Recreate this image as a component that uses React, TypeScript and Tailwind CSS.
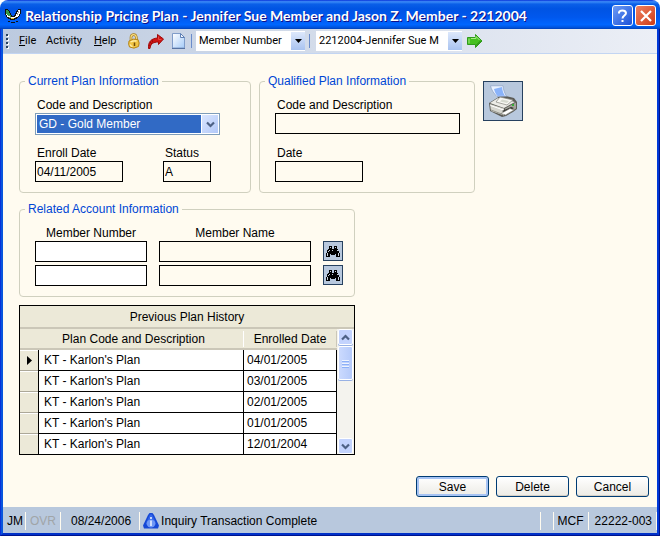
import React, { useState } from "react";

const history = [
  { plan: "KT - Karlon's Plan", date: "04/01/2005" },
  { plan: "KT - Karlon's Plan", date: "03/01/2005" },
  { plan: "KT - Karlon's Plan", date: "02/01/2005" },
  { plan: "KT - Karlon's Plan", date: "01/01/2005" },
  { plan: "KT - Karlon's Plan", date: "12/01/2004" },
];

const AppLogo = () => (
  <svg width="16" height="16" viewBox="0 0 16 16" shapeRendering="crispEdges" aria-hidden="true">
    <path d="M0 2h3v1h1v1h1v2h1v2h1v1h2V8h1V6h1V4h1V3h1V2h3v5h-1v2h-1v1h-1v1h-1v1h-2v1H5v-1H3v-1H2v-1H1V8H0z" fill="#111" />
    <path d="M1 3h2v1h1v2h1v2h1v2H5V9H3V8H2V7H1z" fill="#379a45" />
    <path d="M1 7h1v1h1v1h2v1h5V9h1V7h1V5h1V3h2v4h-1v2h-1v1h-2v1H4v-1H2V8H1z" fill="#fff" />
    <path d="M13 4h1v2h-1zM12 6h1v2h-1zM4 10h2v1H4zM10 10h1v1h-1z" fill="#9a9a9a" />
    <path d="M6 11h3v1H6z" fill="#e7c42e" />
    <path d="M3 14h2v1H3zM6 15h4v1H6zM11 14h2v1h-2z" fill="#111" />
  </svg>
);

const LockIcon = () => (
  <svg width="12" height="16" viewBox="0 0 12 16" aria-hidden="true">
    <path d="M3 8V4.500C3 1 7.500.5 8.300 4L8.500 7" fill="none" stroke="#a87d1c" strokeWidth="2.600" />
    <path d="M3 8V4.500C3 1 7.500.5 8.300 4L8.500 7" fill="none" stroke="#f6dc83" strokeWidth="1.200" />
    <path d="M1 8q4-3 9-1.500q2 3.500.5 7Q6 16.500 1.500 14Q0 11 1 8z" fill="#f1c544" stroke="#b4851d" />
    <path d="M2.500 9q3-1.700 6-1M2 11.500q1 2 2.500 2" fill="none" stroke="#fff0b0" strokeWidth="1.300" />
    <path d="M6.500 9.500v3.500" stroke="#6f4a08" strokeWidth="1.500" />
  </svg>
);

const RedArrowIcon = () => (
  <svg width="16" height="15" viewBox="0 0 16 15" aria-hidden="true">
    <path d="M.5 14.500C0 8 3 4.500 9.500 4V.5l6 4.500-5 5.500V8C5 8 2.500 10 2 14.500z" fill="#cf1414" stroke="#a00b0b" />
    <path d="M1 11l2 1M2 8l2 2M4 6l1 2.500" stroke="#8a0606" strokeWidth=".8" />
    <path d="M10.500 2.500v3h3" fill="none" stroke="#e8473e" />
  </svg>
);

const PageIcon = () => (
  <svg width="13" height="16" viewBox="0 0 13 16" aria-hidden="true">
    <defs>
      <linearGradient id="sheet" x1="0" y1="0" x2="1" y2="1">
        <stop offset="0" stopColor="#fff" />
        <stop offset="1" stopColor="#a4cbf8" />
      </linearGradient>
    </defs>
    <path d="M.5.5h8l4 4v10.500H.5z" fill="url(#sheet)" stroke="#7f9cc9" />
    <path d="M8.500.5v4h4z" fill="#f4f8fe" stroke="#5f80b5" />
    <path d="M0 15.500h13" stroke="#5673a3" />
  </svg>
);

const GreenArrowIcon = () => (
  <svg width="16" height="14" viewBox="0 0 16 14" aria-hidden="true">
    <path d="M.5 3.500h8v-3l6.500 6.500-6.500 6.500v-3h-8z" fill="#44c01f" stroke="#2f9a1c" />
    <path d="M2 4.500v5M4 4.500h5v-2l3.500 3.500" fill="none" stroke="#a6ea84" />
    <path d="M9 11.500l4.500-4.500" stroke="#22820f" />
  </svg>
);

const PrinterIcon = () => (
  <svg width="30" height="32" viewBox="0 0 30 32" aria-hidden="true">
    <path d="M1 18l8-5 4-3 13 3 3 4v7l-4 3-7 4-4 1L2 26z" fill="#5c5c57" />
    <path d="M2 18l8-5 17 4-11 6z" fill="#ecece7" />
    <path d="M8 17l4-5 13 3-6 5z" fill="#f7f7f3" stroke="#85857e" strokeWidth=".7" />
    <path d="M12 16.500l2-2 7 1.500-2 2z" fill="#d5d9cf" />
    <path d="M2 19l14 4.500v7L3 26z" fill="#d6d6cf" />
    <path d="M17 23.500l11-6v6l-3 2-8 5z" fill="#a3a39b" />
    <path d="M2.500 20.500l13 4.500" stroke="#fff" />
    <path d="M3 25l12 4.500" stroke="#96968e" />
    <path d="M2.500.8h12.500c.3 4 1.500 7 3.500 10.500l-9.500.2C5.500 8 3.500 5 2.500.8z" fill="#eaf2ff" stroke="#8096bd" strokeWidth=".6" />
    <path d="M6 4l8-2c.4 4 1.300 6.500 3 8.800l-7.500.2C7.800 9 6.500 6.500 6 4z" fill="#8ab3fa" />
    <path d="M14 26l9-4 3 1-9 5z" fill="#33332f" />
    <path d="M13 28.500l9-5 4 1.500-8.500 5z" fill="#fff" stroke="#77776f" strokeWidth=".6" />
    <path d="M24 19h2v2h-2z" fill="#37ad37" />
  </svg>
);

const BinocularsIcon = () => (
  <svg width="14" height="13" viewBox="0 0 14 13" shapeRendering="crispEdges" aria-hidden="true">
    <path d="M3 1h3v3h2V1h3v3h1v2h1v2h1v4h-4V9H9v1H5V9H4v3H0V8h1V5h1V4h1z" fill="#000" />
    <path d="M4 2h1v1H4zM9 2h1v1H9zM3 5h1v1H3zM11 5h1v1h-1zM1 8h1v3H1zM2 6h1v1H2zM12 8h1v3h-1zM6 5h1v1H6z" fill="#c9d0da" />
  </svg>
);

const InfoIcon = () => (
  <svg width="16" height="16" viewBox="0 0 16 16" aria-hidden="true">
    <path d="M6.500 0h3L11 2l5 10.500-1 3H1l-1-3L5 2z" fill="#1649d6" />
    <path d="M7 1.500h2l3.500 7.500h-9z" fill="#3265ea" />
    <ellipse cx="8" cy="10.500" rx="4.500" ry="4" fill="#6f98f5" />
    <path d="M8 4v2M8 7.500V13" stroke="#e8f0ff" strokeWidth="1.600" />
  </svg>
);

const Chevron = ({ up = false }: { up?: boolean }) => (
  <svg width="9" height="7" viewBox="0 0 9 7" aria-hidden="true">
    <path d={up ? "M1 5.500L4.500 2 8 5.500" : "M1 1.500L4.500 5 8 1.500"} fill="none" stroke="#4d6185" strokeWidth="2.200" />
  </svg>
);

const ToolbarSelect = ({ label, value, className }: { label: string; value: string; className: string }) => (
  <div className={`relative h-5 ${className}`}>
    <select aria-label={label} className="h-full w-full appearance-none truncate bg-white pr-4 pl-[3px]">
      <option>{value}</option>
    </select>
    <span className="pointer-events-none absolute inset-y-px right-0 flex w-[14px] items-center justify-center bg-gradient-to-b from-[#dde8fb] to-[#a9c3f0]">
      <svg width="7" height="4" viewBox="0 0 7 4" aria-hidden="true">
        <path d="M0 0h7L3.500 4z" fill="#000" />
      </svg>
    </span>
  </div>
);

const Field = ({ id, label, value = "", className }: { id: string; label: string; value?: string; className: string }) => (
  <div className="flex flex-col">
    <label htmlFor={id} className="pl-0.5 leading-4">{label}</label>
    <input id={id} readOnly defaultValue={value} className={`h-[21px] border border-black bg-transparent px-px ${className}`} />
  </div>
);

const Group = ({ title, className, children }: { title: string; className: string; children: React.ReactNode }) => (
  <fieldset className={`rounded border border-[#d0d0bf] py-2.5 pl-[15px] ${className}`}>
    <legend className="-ml-2.5 px-[3px] leading-3 text-[#0046d5]">{title}</legend>
    {children}
  </fieldset>
);

const XpButton = ({ children, primary = false }: { children: string; primary?: boolean }) => (
  <button
    className={`h-[21px] w-[73px] rounded-[3px] border border-[#003c74] bg-gradient-to-b from-white to-[#ecebe5] ${
      primary ? "shadow-[inset_0_0_0_2px_#a6c3f3]" : "shadow-[inset_0_-1px_0_#d6d0c5]"
    }`}
  >
    {children}
  </button>
);

const Divider = () => <span className="h-[18px] w-px shrink-0 bg-[#fffbf0]" />;

const App: React.FC = () => {
  const [selected, setSelected] = useState(0);

  return (
    <div className="flex min-h-screen flex-col bg-white font-['Liberation_Sans',Arial,sans-serif] text-xs text-black">
      <header className="flex h-[29px] items-center rounded-t-lg bg-[linear-gradient(to_bottom,#0831d9_0%,#3c8cf8_6%,#0a5fe8_14%,#0054e3_30%,#0058ee_60%,#0066ff_85%,#0055e0_94%,#0040b8_100%)] pr-1 pl-[5px]">
        <AppLogo />
        <h1 className="ml-1 flex-1 truncate pt-0.5 font-['Lato',sans-serif] text-sm leading-5 font-bold text-white [text-shadow:1px_1px_#0f1089]">
          Relationship Pricing Plan - Jennifer Sue Member and Jason Z. Member - 2212004
        </h1>
        <div className="flex gap-0.5 pt-0.5">
          <button aria-label="Help" className="flex size-[21px] items-center justify-center rounded-[3px] border border-white bg-gradient-to-br from-[#6f9bf5] to-[#1a4fd8]">
            <svg width="11" height="14" viewBox="0 0 11 14" aria-hidden="true">
              <path d="M2 4.500V3.500Q2.500 1.500 5.500 1.500T9 4c0 2.500-3.500 2.500-3.500 5.500" fill="none" stroke="#fff" strokeWidth="2" />
              <path d="M4.500 11h2v2h-2z" fill="#fff" />
            </svg>
          </button>
          <button aria-label="Close" className="flex size-[21px] items-center justify-center rounded-[3px] border border-white bg-gradient-to-br from-[#f0805f] to-[#cc3a12]">
            <svg width="12" height="12" viewBox="0 0 12 12" aria-hidden="true">
              <path d="M1 1l10 10M11 1L1 11" stroke="#fff" strokeWidth="2.200" />
            </svg>
          </button>
        </div>
      </header>

      <div className="flex flex-1 flex-col border-x border-b border-l-[#0831d9] border-r-[#00138c] border-b-[#00138c]">
        <div className="flex flex-1 flex-col border-x-2 border-b-2 border-l-[#0855dd] border-r-[#0038d8] border-b-[#0030c8]">
          <nav className="flex h-[25px] items-center border-b border-[#c3d5f2] bg-gradient-to-r from-[#bccadf] to-[#eceff6] pl-[3px] font-['Roboto',sans-serif] text-[11px]">
            <svg width="3" height="15" viewBox="0 0 3 15" shapeRendering="crispEdges" aria-hidden="true">
              <path d="M1 1h2v2H1zM1 5h2v2H1zM1 9h2v2H1zM1 13h2v2H1z" fill="#fff" />
              <path d="M0 0h2v2H0zM0 4h2v2H0zM0 8h2v2H0zM0 12h2v2H0z" fill="#27415f" />
            </svg>
            <button className="ml-2.5 w-4 text-left"><u>F</u>ile</button>
            <button className="ml-[11px] w-9 text-left">Activity</button>
            <button className="ml-3 w-6 text-left"><u>H</u>elp</button>
            <button aria-label="Lock" className="ml-2.5"><LockIcon /></button>
            <button aria-label="Go to" className="ml-2"><RedArrowIcon /></button>
            <button aria-label="New" className="ml-2"><PageIcon /></button>
            <span className="ml-1.5 h-3.5 w-px bg-[#6a8ccb]" />
            <ToolbarSelect label="Search by" value="Member Number" className="ml-1 w-[109px]" />
            <span className="ml-1 h-3.5 w-px bg-[#6a8ccb]" />
            <ToolbarSelect label="Member" value="2212004-Jennifer Sue M" className="ml-1.5 w-[146px]" />
            <button aria-label="Go" className="ml-[5px]"><GreenArrowIcon /></button>
          </nav>

          <main className="flex flex-1 flex-col bg-[#fffbf0] pt-[21px] pr-2 pb-2.5 pl-4">
            <div className="flex items-start gap-2">
              <Group title="Current Plan Information" className="pr-[30px]">
                <label htmlFor="plan" className="block pl-0.5 leading-4">Code and Description</label>
                <div className="relative h-[22px] w-[185px]">
                  <select id="plan" className="h-full w-full appearance-none border border-[#7f9db9] bg-[#316ac5] pl-[3px] text-white shadow-[inset_0_0_0_1px_#fff]">
                    <option>GD - Gold Member</option>
                  </select>
                  <span className="pointer-events-none absolute inset-y-px right-px flex w-[18px] items-center justify-center border border-white bg-gradient-to-br from-[#dbe6fe] to-[#b2c8f8]">
                    <Chevron />
                  </span>
                </div>
                <div className="mt-2.5 flex gap-10">
                  <Field id="enroll" label="Enroll Date" value="04/11/2005" className="w-[88px]" />
                  <Field id="status" label="Status" value="A" className="w-12" />
                </div>
              </Group>

              <Group title="Qualified Plan Information" className="pr-3.5">
                <div className="flex flex-col gap-[11px]">
                  <Field id="qcode" label="Code and Description" className="w-[185px]" />
                  <Field id="qdate" label="Date" className="w-[88px]" />
                </div>
              </Group>

              <button aria-label="Print" className="mt-1.5 flex size-10 items-center justify-center border border-[#27415f] bg-[#b8c8dd]">
                <PrinterIcon />
              </button>
            </div>

            <Group title="Related Account Information" className="mt-2.5 self-start pr-[11px]">
              <div className="grid grid-cols-[112px_152px_20px] gap-x-3 gap-y-[3px]">
                <span id="number-head" className="-mb-[3px] text-center leading-4">Member Number</span>
                <span id="name-head" className="-mb-[3px] text-center leading-4">Member Name</span>
                <span />
                {[1, 2].map((row) => (
                  <React.Fragment key={row}>
                    <input aria-labelledby="number-head" className="h-[21px] w-full border border-black bg-white px-px" />
                    <input aria-labelledby="name-head" readOnly className="h-[21px] w-full border border-black bg-transparent px-px" />
                    <button aria-label="Find member" className="flex size-5 items-center justify-center border border-[#27415f] bg-[#b8c8dd]">
                      <BinocularsIcon />
                    </button>
                  </React.Fragment>
                ))}
              </div>
            </Group>

            <section className="mt-2 w-[336px] border border-black bg-[#ece9d8]">
              <h2 id="history" className="border-b-2 border-[#cbc7b8] pt-px text-center leading-5">Previous Plan History</h2>
              <div className="flex">
                <table aria-labelledby="history" className="flex-1 table-fixed border-separate border-spacing-0">
                  <colgroup>
                    <col className="w-[18px]" />
                    <col />
                    <col className="w-[94px]" />
                  </colgroup>
                  <thead>
                    <tr className="h-[21px]">
                      <th className="border-b-2 border-[#cbc7b8] p-0" />
                      <th className="border-b-2 border-[#cbc7b8] p-0 pr-3.5 font-normal">Plan Code and Description</th>
                      <th className="border-b-2 border-[#cbc7b8] p-0 font-normal">
                        <span className="block border-x border-l-white border-r-[#cbc7b8]">Enrolled Date</span>
                      </th>
                    </tr>
                  </thead>
                  <tbody>
                    {history.map((row, i) => (
                      <tr key={row.date} onClick={() => setSelected(i)} className="group h-[21px] last:h-5">
                        <td className="border-t border-b border-t-white border-b-[#aca899] p-0 group-last:border-b-0">
                          {i === selected && (
                            <svg width="5" height="9" viewBox="0 0 5 9" className="mx-auto" aria-hidden="true">
                              <path d="M0 0l5 4.500L0 9z" fill="#000" />
                            </svg>
                          )}
                        </td>
                        <td className="border-b border-l border-black bg-white p-0 pl-[5px] group-last:border-b-0">{row.plan}</td>
                        <td className="border-x border-b border-black bg-white p-0 pl-[3px] group-last:border-b-0">{row.date}</td>
                      </tr>
                    ))}
                  </tbody>
                </table>
                <div className="flex w-[17px] flex-col bg-[#f4f3ee] px-px">
                  <button aria-label="Scroll up" className="flex h-4 items-center justify-center rounded-xs border border-white bg-[#c3d3fd] shadow-[0_1px_#98b1e4]">
                    <Chevron up />
                  </button>
                  <div className="mt-px flex h-[34px] flex-col items-center justify-center gap-px rounded-xs border border-white bg-gradient-to-r from-[#cbdafe] to-[#b5cafa] shadow-[0_1px_#98b1e4]">
                    <span className="h-px w-[7px] bg-[#eef4fe] shadow-[0_1px_#8cb0f8]" />
                    <span className="mt-px h-px w-[7px] bg-[#eef4fe] shadow-[0_1px_#8cb0f8]" />
                    <span className="mt-px h-px w-[7px] bg-[#eef4fe] shadow-[0_1px_#8cb0f8]" />
                  </div>
                  <button aria-label="Scroll down" className="mt-auto flex h-4 items-center justify-center rounded-xs border border-white bg-[#c3d3fd]">
                    <Chevron />
                  </button>
                </div>
              </div>
            </section>

            <div className="mt-auto flex justify-end gap-[7px] pt-5">
              <XpButton primary>Save</XpButton>
              <XpButton>Delete</XpButton>
              <XpButton>Cancel</XpButton>
            </div>
          </main>

          <footer className="flex h-[26px] items-center bg-[#b8c8dd] pt-0.5 pl-1">
            <span>JM</span>
            <span className="ml-0.5 flex"><Divider /></span>
            <span className="mx-1 text-[#a0a5a8]">OVR</span>
            <Divider />
            <span className="mr-2 ml-2.5">08/24/2006</span>
            <Divider />
            <span className="ml-[3px] flex items-center gap-0.5">
              <InfoIcon />
              Inquiry Transaction Complete
            </span>
            <span className="ml-auto flex items-center">
              <Divider />
              <span className="w-3" />
              <Divider />
              <span className="mx-1">MCF</span>
              <Divider />
              <span className="mr-1 ml-1.5">22222-003</span>
              <Divider />
            </span>
          </footer>
        </div>
      </div>
    </div>
  );
};

export default App;
